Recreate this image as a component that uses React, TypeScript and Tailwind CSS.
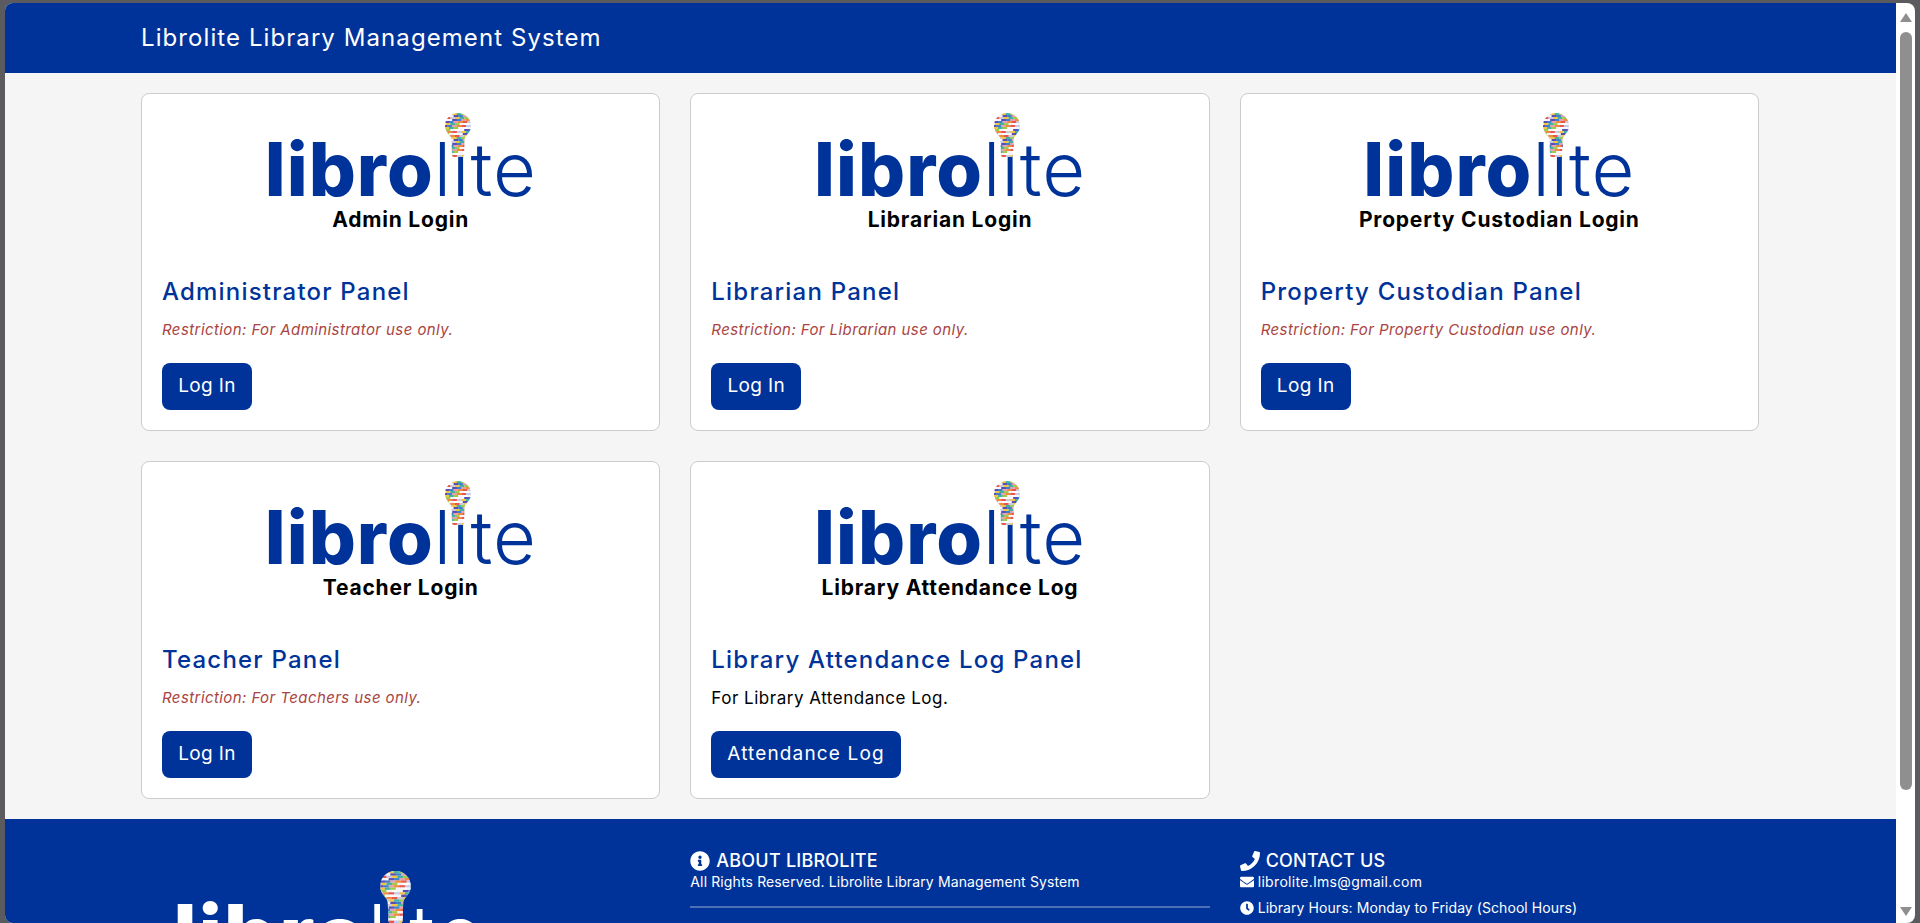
import { useId } from 'react'
import { FaClock, FaEnvelope, FaInfoCircle, FaPhone } from 'react-icons/fa'

const panels = [
  { login: 'Admin Login', title: 'Administrator Panel', note: 'Restriction: For Administrator use only.', button: 'Log In' },
  { login: 'Librarian Login', title: 'Librarian Panel', note: 'Restriction: For Librarian use only.', button: 'Log In' },
  { login: 'Property Custodian Login', title: 'Property Custodian Panel', note: 'Restriction: For Property Custodian use only.', button: 'Log In' },
  { login: 'Teacher Login', title: 'Teacher Panel', note: 'Restriction: For Teachers use only.', button: 'Log In' },
  { login: 'Library Attendance Log', title: 'Library Attendance Log Panel', text: 'For Library Attendance Log.', button: 'Attendance Log' },
]

const flagColors = ['#e8574f', '#f4f4fa', '#f4c542', '#3f7fd0', '#9ccc4a', '#f08a3c', '#ffffff', '#c9c9e0', '#5a4fb0', '#43b3a0', '#e8a0b0', '#f4f4fa']

// multicoloured "flags" bulb that sits over the i of the logo
function Bulb() {
  const id = useId()
  const rows = Array.from({ length: 22 }, (_, i) => i)
  return (
    <svg viewBox="0 0 26 44" className="w-full h-full">
      <defs>
        <clipPath id={id}>
          <path d="M13 0a13 13 0 0 1 13 13c0 5-3 7.500-5 10-1 1.400-1.500 2.500-1.500 4l-.5 15c0 1-1 2-2 2h-8c-1 0-2-1-2-2l-.5-15c0-1.500-.5-2.600-1.500-4C3 20.500 0 18 0 13A13 13 0 0 1 13 0z" />
        </clipPath>
      </defs>
      <g clipPath={`url(#${id})`}>
        <rect width="26" height="44" fill="#eeeef6" />
        {rows.map((r) =>
          [0, 1, 2, 3, 4, 5].map((c) => (
            <rect
              key={`${r}-${c}`}
              x={c * 4.6 + (r % 3) * 1.4 - 2}
              y={r * 2}
              width="4.800"
              height="2"
              fill={flagColors[(r * 5 + c * 7 + (r % 4)) % flagColors.length]}
            />
          )),
        )}
      </g>
    </svg>
  )
}

function CardLogo() {
  return (
    <div className="relative w-[266px] h-[90px] mx-auto">
      <div className="absolute left-[-3px] top-[21px] font-['Inter',sans-serif] text-[74px] leading-[69px] text-[#003399] whitespace-nowrap tracking-[0.014em]">
        <span className="font-extrabold">libro</span>
        <span className="font-light">lite</span>
      </div>
      <div className="absolute left-[177px] top-[-1px] w-[26px] h-[44px]">
        <Bulb />
      </div>
    </div>
  )
}

function FooterLogo() {
  return (
    <div className="relative w-[312px] h-[110px] ml-[35px]">
      <div className="absolute left-[-3px] top-[23px] font-['Inter',sans-serif] text-[85px] leading-[84px] text-white whitespace-nowrap tracking-[0.014em]">
        <span className="font-extrabold">libro</span>
        <span className="font-light">lite</span>
      </div>
      <div className="absolute left-[204px] top-0 w-[31px] h-[52px]">
        <Bulb />
      </div>
    </div>
  )
}

function PanelCard({ panel }: { panel: (typeof panels)[number] }) {
  return (
    <div className="bg-white border border-[#cccccc] rounded-lg p-5 h-[338px]">
      <CardLogo />
      <p className="h-8 text-center text-[21px] leading-8 font-bold text-black tracking-[0.038em]">{panel.login}</p>
      <h2 className="mt-[38px] text-[24px] leading-9 font-medium text-[#003399] tracking-[0.05em]">{panel.title}</h2>
      {panel.note ? (
        <p className="mt-[8px] text-[15px] leading-6 italic text-[#a94442] tracking-[0.028em]">{panel.note}</p>
      ) : (
        <p className="mt-[8px] text-[17px] leading-6 text-black tracking-[0.03em]">{panel.text}</p>
      )}
      {panel.note ? (
        <button className="mt-[21px] h-[47px] w-[90px] rounded-lg bg-[#003399] text-white text-[19px] tracking-[0.02em]">
          {panel.button}
        </button>
      ) : (
        <button className="mt-[21px] h-[47px] px-4 rounded-lg bg-[#003399] text-white text-[19px] tracking-[0.06em]">
          {panel.button}
        </button>
      )}
    </div>
  )
}

function Scrollbar() {
  return (
    <div className="w-[19px] shrink-0 bg-white flex flex-col items-center pt-[10px] pb-[7px]">
      <div className="w-0 h-0 border-x-[6px] border-x-transparent border-b-[9px] border-b-[#8f8f8f]" />
      <div className="w-3 h-[758px] mt-[10px] rounded-full bg-[#8f8f8f]" />
      <div className="mt-auto w-0 h-0 border-x-[6px] border-x-transparent border-t-[9px] border-t-[#8f8f8f]" />
    </div>
  )
}

export default function App() {
  return (
    <div className="h-[923px] overflow-hidden bg-[#5b5b5f] pt-[3px] px-[5px] font-['Inter',sans-serif]">
      <div className="h-full flex rounded-lg overflow-hidden">
        <div className="flex-1 min-w-0 flex flex-col bg-[#f5f5f5]">
          <header className="h-[70px] shrink-0 bg-[#003399] flex items-center pl-[136px]">
            <h1 className="text-[24px] text-white tracking-[0.045em]">Librolite Library Management System</h1>
          </header>

          <main className="shrink-0 ml-[136px] w-[1618px] py-5 grid grid-cols-3 gap-[30px]">
            {panels.map((panel) => (
              <PanelCard key={panel.title} panel={panel} />
            ))}
          </main>

          <footer className="flex-1 bg-[#003399] text-white">
            <div className="ml-[136px] w-[1618px] grid grid-cols-3 gap-x-[30px]">
              <div className="pt-[52px]">
                <FooterLogo />
              </div>
              <div className="pt-[30px]">
                <h3 className="flex items-center gap-[6px] text-[18px] leading-6 font-medium tracking-[0.012em]">
                  <FaInfoCircle className="w-[20px] h-[20px]" />
                  ABOUT LIBROLITE
                </h3>
                <p className="text-[14px] leading-[18px] tracking-[0.009em]">All Rights Reserved. Librolite Library Management System</p>
                <hr className="mt-[15px] border-0 h-[2px] bg-white/30" />
              </div>
              <div className="pt-[30px]">
                <h3 className="flex items-center gap-[6px] text-[18px] leading-6 font-medium tracking-[0.012em]">
                  <FaPhone className="w-[20px] h-[20px]" />
                  CONTACT US
                </h3>
                <p className="flex items-center gap-1 text-[14px] leading-[18px] tracking-[0.024em]">
                  <FaEnvelope className="w-[14px] h-[14px]" />
                  librolite.lms@gmail.com
                </p>
                <p className="mt-2 flex items-center gap-1 text-[14px] leading-[18px] tracking-[0.005em]">
                  <FaClock className="w-[14px] h-[14px]" />
                  Library Hours: Monday to Friday (School Hours)
                </p>
              </div>
            </div>
          </footer>
        </div>
        <Scrollbar />
      </div>
    </div>
  )
}
